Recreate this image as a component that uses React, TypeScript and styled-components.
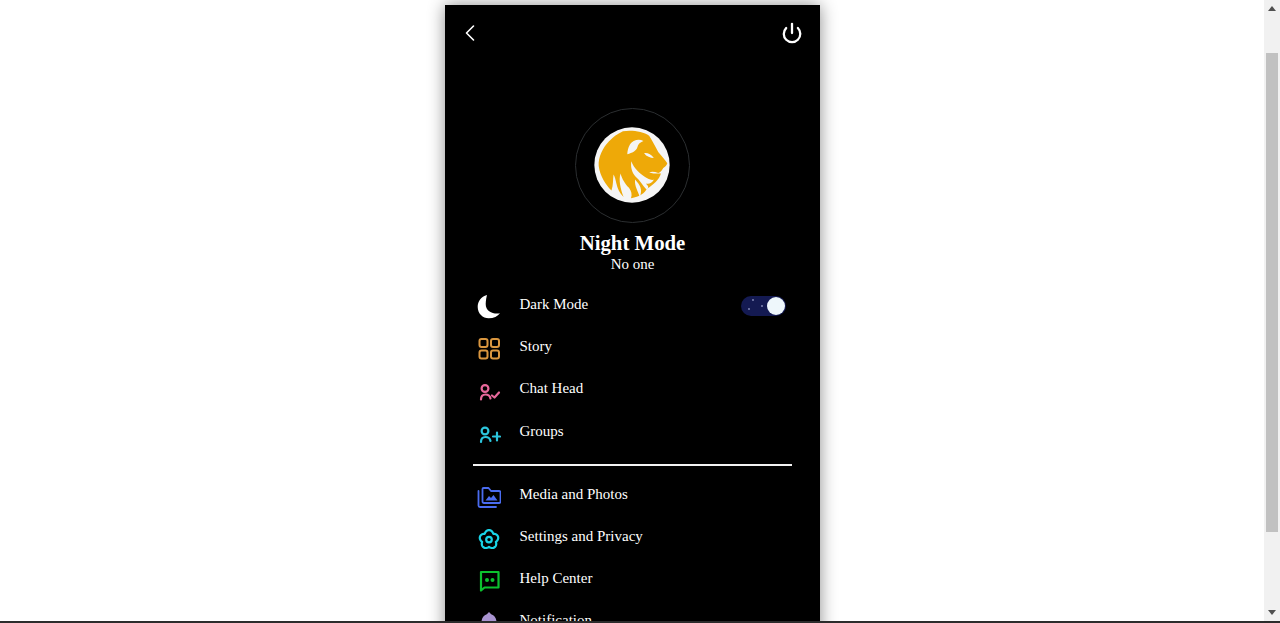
import React from "react";
import styled, { createGlobalStyle } from "styled-components";
import { ChevronLeft, Power } from "lucide-react";

const GlobalStyle = createGlobalStyle`
  html, body {
    margin: 0;
    height: 100%;
    overflow: hidden;
    background: #fff;
    font-family: "Liberation Serif", "Times New Roman", serif;
  }
`;

const Screen = styled.div`
  height: 100vh;
  display: flex;
  flex-direction: column;
`;

const Viewport = styled.div`
  flex: 1;
  min-height: 0;
  display: flex;
`;

const Page = styled.main`
  flex: 1;
  min-width: 0;
  overflow: hidden;
  display: flex;
  justify-content: center;
  padding-top: 5px;
`;

const Phone = styled.section`
  width: 375px;
  height: 760px;
  flex-shrink: 0;
  background: #000;
  color: #fff;
  box-shadow: 0 0 16px rgba(0, 0, 0, 0.45);
  margin-left: 1px;
`;

const TopBar = styled.header`
  height: 56px;
  padding: 0 17px 0 11px;
  display: flex;
  align-items: center;
  justify-content: space-between;
`;

const Profile = styled.div`
  margin-top: 47px;
  display: flex;
  flex-direction: column;
  align-items: center;
`;

const Ring = styled.div`
  width: 113px;
  height: 113px;
  border: 1px solid #2b2e30;
  border-radius: 50%;
  display: flex;
  align-items: center;
  justify-content: center;
`;

const Logo = styled.svg`
  margin: 0 2px 2px 0;
`;

const Name = styled.h1`
  margin: 7px 0 1px;
  font-size: 20.8px;
  line-height: 25px;
  font-weight: 700;
`;

const Status = styled.p`
  margin: 0;
  font-size: 15px;
  line-height: 17px;
`;

const IconSlot = styled.span<{ $color: string }>`
  width: 32px;
  height: 24px;
  padding-left: 4px;
  margin-top: 10px;
  margin-right: 10.5px;
  color: ${(props) => props.$color};
  display: flex;
  align-items: center;
`;

const Menu = styled.ul`
  list-style: none;
  margin: 0;
  padding: 0 28px;
`;

const TopMenu = styled(Menu)`
  margin-top: 12px;
`;

const Row = styled.li`
  height: 42.2px;
  display: flex;
  align-items: flex-start;
`;

const Label = styled.span`
  flex: 1;
  font-size: 15px;
  line-height: 17px;
  margin-top: 11px;
`;

const Toggle = styled.span`
  position: relative;
  width: 45px;
  height: 20px;
  margin: 11px 6px 0 0;
  border-radius: 10px;
  background: #141a52;
`;

const Star = styled.i<{ $x: number; $y: number }>`
  position: absolute;
  left: ${(props) => props.$x}px;
  top: ${(props) => props.$y}px;
  width: 2px;
  height: 2px;
  border-radius: 50%;
  background: #7f86b5;
`;

const Knob = styled.span`
  position: absolute;
  right: 1px;
  top: 1px;
  width: 18px;
  height: 18px;
  border-radius: 50%;
  background: #eef7fb;
`;

const Divider = styled.hr`
  margin: 10px 28px 9px;
  border: 0;
  height: 2px;
  background: #f2f2f2;
`;

const Scrollbar = styled.aside`
  width: 16px;
  flex-shrink: 0;
  background: #f1f1f1;
  display: flex;
  flex-direction: column;
  align-items: center;
  padding: 6px 0;
  box-sizing: border-box;
`;

const ScrollThumb = styled.div`
  width: 12px;
  height: 479px;
  margin: 42px 0 auto;
  background: #c1c1c1;
`;

const TaskbarEdge = styled.div`
  height: 2px;
  flex-shrink: 0;
  background: #2c2c2c;
`;

const Arrow = ({ down }: { down?: boolean }) => (
  <svg width="8" height="5" viewBox="0 0 8 5">
    <path d={down ? "M0 0h8L4 5z" : "M0 5h8L4 0z"} fill="#505050" />
  </svg>
);

const Moon = () => (
  <svg width="24" height="24" viewBox="0 0 24 24">
    <path
      d="M10 0C4 1.500 .7 6.500 .7 12c0 6.500 5 11.300 11 11.300 5 0 9-2 11.300-5C17 19.500 8.500 17 8.700 9 8.800 5 9.500 2 10 0z"
      fill="currentColor"
    />
  </svg>
);

const Squares = () => (
  <svg width="24" height="24" viewBox="0 0 24 24" fill="none" stroke="currentColor" strokeWidth="2">
    <rect x="2.500" y="2" width="8" height="8" rx="2" />
    <rect x="14" y="2" width="8" height="8" rx="2" />
    <rect x="2.500" y="13.500" width="8" height="8" rx="2" />
    <rect x="14" y="13.500" width="8" height="8" rx="2" />
  </svg>
);

const UserCheckIcon = () => (
  <svg width="24" height="24" viewBox="0 0 24 24" fill="none" stroke="currentColor" strokeWidth="2.200" strokeLinecap="round" strokeLinejoin="round">
    <circle cx="8" cy="9.500" r="3.400" />
    <path d="M4 20.500c0-3.500 2-5 4.500-5s4.500 1.500 5 4" />
    <path d="M15 16.500l2.500 2 4.500-5" />
  </svg>
);

const UserPlusIcon = () => (
  <svg width="24" height="24" viewBox="0 0 24 24" fill="none" stroke="currentColor" strokeWidth="2.200" strokeLinecap="round" strokeLinejoin="round">
    <circle cx="8" cy="9" r="3.400" />
    <path d="M4 20c0-3.500 2-5 4.500-5s4.500 1.500 5 4" />
    <path d="M20 10.500v8M16 14.500h7" />
  </svg>
);

const Media = () => (
  <svg width="24" height="24" viewBox="0 0 24 24" fill="none" stroke="currentColor" strokeWidth="1.800" strokeLinejoin="round">
    <path d="M1.500 6v14.500q0 1.500 1.500 1.500H19" strokeLinecap="round" />
    <path d="M5.500 4q0-1 1-1h5l2.500 3H22q1.500 0 1.500 1.500v9q0 1.500-1.500 1.500H7q-1.500 0-1.500-1.500z" />
    <path d="M8.500 15.500l3.500-4.500 2 2 2.500-3 4 5.500z" fill="currentColor" stroke="none" />
  </svg>
);

// five round lobes around the centre, notched between them
const gearPath =
  Array.from({ length: 90 }, (_, i) => {
    const angle = (i / 90) * Math.PI * 2 - Math.PI / 2;
    const radius = 7.2 + 2.3 * Math.abs(Math.cos(2.5 * (angle + Math.PI / 2)));
    const x = 12 + radius * Math.cos(angle);
    const y = 12.6 + radius * Math.sin(angle);
    return `${i === 0 ? "M" : "L"}${x.toFixed(2)} ${y.toFixed(2)}`;
  }).join("") + "z";

const Gear = () => (
  <svg width="24" height="24" viewBox="0 0 24 24" fill="none" stroke="currentColor" strokeWidth="2.200" strokeLinejoin="round">
    <path d={gearPath} />
    <circle cx="12" cy="12.600" r="2.800" />
  </svg>
);

const Chat = () => (
  <svg width="24" height="24" viewBox="0 0 24 24" fill="none" stroke="currentColor" strokeWidth="2.200" strokeLinejoin="round">
    <path d="M4 3h17.500v15.500H7.500L4 21.500z" />
    <circle cx="10" cy="11" r="2" fill="currentColor" stroke="none" />
    <circle cx="15.500" cy="11" r="2" fill="currentColor" stroke="none" />
  </svg>
);

const Bell = () => (
  <svg width="24" height="24" viewBox="0 0 24 24">
    <path d="M12 1l2.200 2.200C17.500 4 19.500 7.500 19.500 11v8h-15v-8c0-3.500 2-7 5.300-7.800z" fill="currentColor" />
  </svg>
);

const Lion = () => (
  <Logo width="76" height="76" viewBox="14 14 226 226">
    <circle cx="127" cy="127" r="112" fill="#f5f5f5" />
    <path
      fill="#eea908"
      d="M100 27C125 23 160 27 178 40C188 55 196 72 205 88C215 100 226 112 232 122C230 128 226 133 220 136C215 145 210 150 205 151C195 147 186 146 178 149C190 153 205 153 213 152C208 170 190 186 172 197C165 210 150 222 124 226C128 215 125 205 118 195C105 180 98 170 93 152C87 170 92 195 102 222C90 212 84 198 80 180C78 170 76 162 72 155C70 170 72 185 66 203C48 185 32 160 28 130C26 105 40 75 60 55C48 80 52 50 100 27Z"
    />
    <path
      fill="#f5f5f5"
      d="M113 95C114 78 120 62 132 56C142 51 152 51 161 56C150 60 145 66 143 74C139 86 128 90 113 95ZM163 92C172 90 184 95 192 106C182 106 170 102 163 92ZM125 116C132 136 150 154 175 168C180 171 186 172 192 171C186 182 176 185 168 182C176 190 178 194 170 200C158 187 150 172 138 162C128 152 122 135 125 116ZM136 170C150 185 160 200 150 222C145 205 134 190 136 170Z"
    />
  </Logo>
);

export default function App() {
  return (
    <Screen>
      <GlobalStyle />
      <Viewport>
        <Page>
          <Phone>
            <TopBar>
              <ChevronLeft size={28} strokeWidth={1.4} />
              <Power size={22} strokeWidth={2.500} />
            </TopBar>
            <Profile>
              <Ring>
                <Lion />
              </Ring>
              <Name>Night Mode</Name>
              <Status>No one</Status>
            </Profile>
            <TopMenu>
              <Row>
                <IconSlot $color="#fff">
                  <Moon />
                </IconSlot>
                <Label>Dark Mode</Label>
                <Toggle>
                  <Star $x={11} $y={3} />
                  <Star $x={7} $y={12} />
                  <Star $x={20} $y={9} />
                  <Knob />
                </Toggle>
              </Row>
              <Row>
                <IconSlot $color="#d9963f">
                  <Squares />
                </IconSlot>
                <Label>Story</Label>
              </Row>
              <Row>
                <IconSlot $color="#e8689b">
                  <UserCheckIcon />
                </IconSlot>
                <Label>Chat Head</Label>
              </Row>
              <Row>
                <IconSlot $color="#2cc5dc">
                  <UserPlusIcon />
                </IconSlot>
                <Label>Groups</Label>
              </Row>
            </TopMenu>
            <Divider />
            <Menu>
              <Row>
                <IconSlot $color="#4a6cf0">
                  <Media />
                </IconSlot>
                <Label>Media and Photos</Label>
              </Row>
              <Row>
                <IconSlot $color="#19d3e6">
                  <Gear />
                </IconSlot>
                <Label>Settings and Privacy</Label>
              </Row>
              <Row>
                <IconSlot $color="#0cc12f">
                  <Chat />
                </IconSlot>
                <Label>Help Center</Label>
              </Row>
              <Row>
                <IconSlot $color="#a994d0">
                  <Bell />
                </IconSlot>
                <Label>Notification</Label>
              </Row>
            </Menu>
          </Phone>
        </Page>
        <Scrollbar>
          <Arrow />
          <ScrollThumb />
          <Arrow down />
        </Scrollbar>
      </Viewport>
      <TaskbarEdge />
    </Screen>
  );
}
